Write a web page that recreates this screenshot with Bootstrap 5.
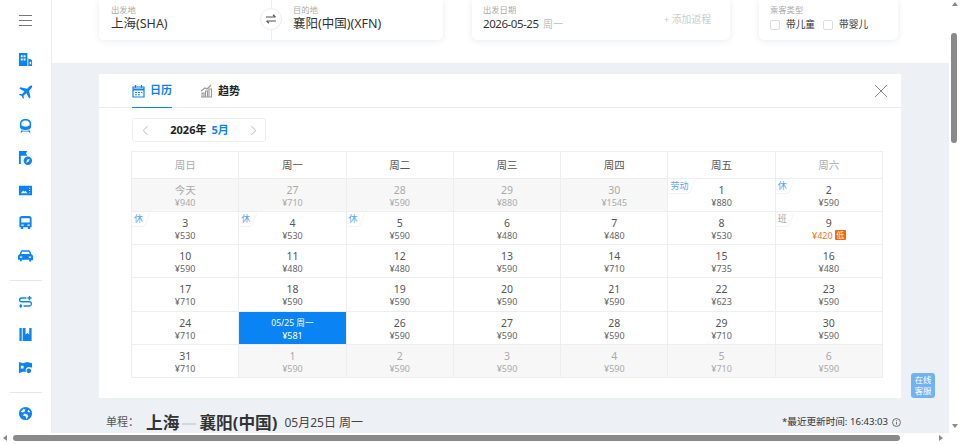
<!doctype html>
<html lang="zh-CN">
  <head>
    <meta charset="utf-8">
    <meta name="viewport" content="width=device-width, initial-scale=1">
    <title>低价日历</title>
    <link href="https://cdn.jsdelivr.net/npm/bootstrap@5.3.0/dist/css/bootstrap.min.css" rel="stylesheet">
    <style>
      html, body { height: 100%; overflow: hidden; }
      body { font-family: "Noto Sans", "Noto Sans CJK SC", sans-serif; color: #333; background: #fff; font-size: 12px; }
      .shell { width: 960px; height: 444px; position: relative; overflow: hidden; }
      .upper { height: 433px; }
      .side { width: 52px; border-right: 1px solid #e9edf2; padding-top: 15px; }
      .burger { width: 13px; height: 11px; border-top: 1px solid #777; border-bottom: 1px solid #777; position: relative; margin-bottom: 17.7px; flex-shrink: 0; }
      .burger::after { content: ""; position: absolute; left: 0; right: 0; top: 4px; border-top: 1px solid #777; }
      .side-ico { height: 32.6px; flex-shrink: 0; }
      .side-ico svg { width: 15px; height: 15px; fill: #0a84f5; }
      .side-line { width: 32px; border-top: 1px solid #e6e6e6; margin: 8px 0 5px; flex-shrink: 0; }
      .view { width: 897px; }
      .topbar { height: 63px; padding-left: 47px; gap: 29px; background: #fff; }
      .qcard { height: 40px; background: #fff; border-radius: 0 0 5px 5px; box-shadow: 0 1px 6px rgba(30, 50, 90, .1); padding: 4px 11px 0; position: relative; }
      .qcard-a { width: 344px; padding-left: 12px; }
      .qcard-b { width: 258px; }
      .qcard-c { width: 139px; }
      .lbl { font-size: 8.300px; color: #aaa; line-height: 12px; }
      .val { font-size: 12.500px; color: #333; line-height: 15px; white-space: nowrap; }
      .val-date { font-size: 11.500px; letter-spacing: -.45px; }
      .val-half { width: 160px; flex-shrink: 0; }
      .val-half + .val-half { width: 172px; border-left: 1px solid #eee; padding-left: 21px; height: 40px; margin-top: -4px; padding-top: 4px; }
      .swap { position: absolute; left: 161px; top: 8px; width: 22px; height: 22px; border-radius: 50%; background: #fff; border: 1px solid #eee; z-index: 1; }
      .muted-day { color: #bbb; font-size: 10px; letter-spacing: 0; margin-left: 2px; }
      .add-back { position: absolute; right: 19px; top: 12px; color: #ccc; font-size: 9.800px; line-height: 15px; }
      .tick { width: 10px; height: 10px; border: 1px solid #ddd; border-radius: 2px; margin-right: 6px; flex-shrink: 0; }
      .pax { font-size: 9.700px; margin-right: 8px; line-height: 18px; white-space: nowrap; }
      .graybody { background: #edf0f5; height: 370px; padding: 11px 0 0 47px; }
      .panel { width: 802px; height: 324px; background: #fff; position: relative; }
      .tabbar { height: 34px; border-bottom: 1px solid #e8ecf0; padding-left: 33px; gap: 28px; }
      .tabitem { height: 34px; font-size: 11px; font-weight: 700; color: #222; gap: 5px; }
      .tabitem.on { color: #0a84f5; border-bottom: 1px solid #0a84f5; width: 40px; }
      .tabitem svg { width: 13px; height: 14px; flex-shrink: 0; }
      .closer { position: absolute; right: 13px; top: 10px; width: 14px; height: 14px; }
      .monthbox { width: 134px; height: 24px; margin: 10px 0 9px 33px; border: 1px solid #eee; border-radius: 3px; padding: 0 8px 0 9px; font-size: 11px; font-weight: 700; color: #222; }
      .monthbox em { font-style: normal; color: #0a84f5; font-size: 11px; margin-left: 5px; }
      .monthbox svg { width: 7px; height: 11px; }
      .calgrid { width: 752px; margin-left: 32px; display: grid; grid-template-columns: repeat(7, 1fr); grid-template-rows: 27px repeat(6, 33.170px); border-top: 1px solid #eee; border-left: 1px solid #eee; }
      .cal-h, .cal-d { border-right: 1px solid #eee; border-bottom: 1px solid #eee; text-align: center; position: relative; }
      .cal-h { font-size: 10.500px; line-height: 26px; color: #555; }
      .cal-h.wk { color: #aaa; }
      .cal-d { padding-top: 4px; background: #fff; }
      .cal-d b { display: block; font-weight: 400; font-size: 10.500px; line-height: 14px; color: #555; }
      .cal-d i { display: block; font-style: normal; font-size: 9px; line-height: 11px; color: #666; }
      .cal-d.past { background: #f7f7f7; }
      .cal-d.past b, .cal-d.past i { color: #aaa; }
      .cal-d.sel { background: #0a84f5; }
      .cal-d.sel b { color: #fff; font-size: 8.600px; }
      .cal-d.sel i { color: #fff; }
      .cal-d.low i { color: #f5771f; }
      .lowtag { display: inline-block; width: 11px; height: 10px; background: #f5670f; color: #fff; font-size: 8px; line-height: 10px; border-radius: 1px; margin-left: 2px; vertical-align: top; }
      .holi { position: absolute; left: 0; top: 0; height: 14px; font-size: 9px; line-height: 13px; padding: 0 7px 0 2px; color: #5aa5f5; z-index: 1; }
      .holi::before { content: ""; position: absolute; left: -4px; right: 3px; top: 0; bottom: 0; background: #fff; border-radius: 0 0 3px 0; box-shadow: 1px 1px 1px rgba(0, 0, 0, .05); transform: skewX(-20deg); z-index: -1; }
      .holi-clip { position: absolute; left: 0; top: 0; width: 40px; height: 18px; overflow: hidden; }
      .holi.work { color: #aaa; }
      .routeline { height: 35px; width: 795px; margin-left: 7px; padding-top: 14px; }
      .routeline .kind { font-size: 11px; color: #555; width: 40px; }
      .routeline .city { font-size: 16.700px; font-weight: 700; color: #333; }
      .routeline .dash { width: 14px; border-top: 2px solid #d3d6da; margin: 2px 3px 0; }
      .routeline .when { font-size: 12px; color: #444; margin-left: 7px; }
      .updated { font-size: 9.600px; color: #333; }
      .updated svg { width: 9px; height: 9px; margin-left: 4px; }
      .vbar { width: 11px; background: #fff; position: relative; }
      .vthumb { position: absolute; left: 2px; top: 33px; width: 6px; height: 110px; border-radius: 3px; background: #8a8a8a; }
      .hbar { height: 11px; background: #fff; position: relative; }
      .hthumb { position: absolute; left: 13px; top: 2px; width: 887px; height: 6px; border-radius: 3px; background: #8a8a8a; }
      .arrow { position: absolute; width: 0; height: 0; border: 3px solid transparent; }
      .arrow-u { left: 3px; top: 2px; border-bottom: 4px solid #8a8a8a; border-top: 0; }
      .arrow-d { left: 3px; bottom: 5px; border-top: 4px solid #8a8a8a; border-bottom: 0; }
      .arrow-l { left: 3px; top: 2px; border-right: 4px solid #8a8a8a; border-left: 0; }
      .arrow-r { left: 939px; top: 2px; border-left: 4px solid #8a8a8a; border-right: 0; }
      .helper { position: absolute; left: 911px; top: 373px; width: 24px; height: 25px; border-radius: 3px; background: #71b3f2; color: #fff; font-size: 8.300px; line-height: 11px; text-align: center; padding-top: 1px; }
      .helper div { height: 11px; }
    </style>
  </head>
  <body>
    <div class="shell">
      <div class="upper d-flex">
        <!-- left menu -->
        <div class="side d-flex flex-column align-items-center flex-shrink-0">
          <div class="burger"></div>
          <div class="side-ico d-flex align-items-center justify-content-center"><svg viewBox="0 0 16 16"><path d="M1 1h9v14H1zM3 3.500v2h2v-2zM6 3.500v2h2v-2zM3 7v2h2V7zM6 7v2h2V7zM11 7l4 1.500V15h-4zM12.500 10.500V13H14v-2.500z" fill-rule="evenodd"/></svg></div>
          <div class="side-ico d-flex align-items-center justify-content-center"><svg viewBox="0 0 16 16"><path d="M15.500.5c-1.200-.3-2.700.3-3.700 1.300L9.700 3.900 2.700 2.400 1.400 3.700l5.500 3.100-2.700 3-2.300-.4L1 10.300l3 1.400 1.400 3 .9-.9-.4-2.300 3-2.700 3.100 5.500 1.300-1.300-1.500-7 2.100-2.100c1-1 1.600-2.500 1.100-3.400z"/></svg></div>
          <div class="side-ico d-flex align-items-center justify-content-center"><svg viewBox="0 0 16 16"><path d="M8 1C4.200 1 2 3 2 6.500V9c0 2.500 2.200 3.800 6 3.800s6-1.300 6-3.800V6.500C14 3 11.800 1 8 1zm0 1.600c2.700 0 4.400 1.400 4.400 3.900v1.300C11.400 8.700 9.800 9.200 8 9.200s-3.400-.5-4.400-1.400V6.500C3.600 4 5.300 2.600 8 2.600zM3.700 13 2.500 15.500h1.700l.5-1h6.600l.5 1h1.700L12.300 13c-1.100.4-2.600.6-4.300.6s-3.200-.2-4.300-.6z" fill-rule="evenodd"/></svg></div>
          <div class="side-ico d-flex align-items-center justify-content-center"><svg viewBox="0 0 16 16"><path d="M1 1h9L8.500 3.500 10 6H3v9H1zM10.500 7a4.500 4.500 0 1 0 0 9 4.500 4.500 0 0 0 0-9zm2 2.300-1 3-2.800 1.200 1-3z" fill-rule="evenodd"/></svg></div>
          <div class="side-ico d-flex align-items-center justify-content-center"><svg viewBox="0 0 16 16"><path d="M1 3h14v10H1zM3 11h7L8 8.500 6.800 9.300 5.500 8zM12 5v1h1V5zM12 7.500v1h1v-1zM12 10v1h1v-1z" fill-rule="evenodd"/></svg></div>
          <div class="side-ico d-flex align-items-center justify-content-center"><svg viewBox="0 0 16 16"><path d="M4 1h8c1.600 0 2.500 1 2.500 2.500V13H13v2h-2.500v-2h-5v2H3v-2H1.500V3.500C1.500 2 2.400 1 4 1zM3.500 3.500V8h9V3.500zM3.500 10v1.500H6V10zM10 10v1.500h2.500V10z" fill-rule="evenodd"/></svg></div>
          <div class="side-ico d-flex align-items-center justify-content-center"><svg viewBox="0 0 16 16"><path d="M4.500 2.500h7c.8 0 1.300.4 1.600 1l1.100 3.200c1 .4 1.800 1.200 1.800 2.300v4h-2v1.500h-2V12.500H4v1.500H2v-1.500H0V9c0-1.100.8-1.900 1.800-2.300L2.900 3.500c.3-.6.800-1 1.600-1zM4.300 4 3.500 6.500h9L11.700 4zM2 9v1.500h2.500V9zM11.500 9v1.500H14V9z" fill-rule="evenodd"/></svg></div>
          <div class="side-line"></div>
          <div class="side-ico d-flex align-items-center justify-content-center"><svg viewBox="0 0 16 16"><path d="M3.500 2.500H9V4H3.800C3 4 2.500 4.500 2.500 5.300S3 6.500 3.800 6.500h8.400c1.600 0 2.800 1.200 2.800 2.900s-1.200 3-2.800 3H6v-1.500h6.200c.8 0 1.300-.2 1.300-1.500S13 8 12.200 8H3.800C2.200 8 1 6.800 1 5.300s1-2.800 2.500-2.800zM11.500 1H13v1.500h1.500V4H13v1.500h-1.500V4H10V2.500h1.500zM1.500 11h3v1.500h-3zM2.200 9.800h1.500v3.900H2.200z"/></svg></div>
          <div class="side-ico d-flex align-items-center justify-content-center"><svg viewBox="0 0 16 16"><path d="M1.500 1H4v14H1.500zM5 1h3v7l2-1.500L12 8V1h2.500v14H5z"/></svg></div>
          <div class="side-ico d-flex align-items-center justify-content-center"><svg viewBox="0 0 16 16"><path d="M1 2l4 1.500L10 2l5 1.500V8h-1.500a3.500 3.500 0 0 0-5 4.500H5L1 14zM3 6v3h3V6zM11.500 9a2.500 2.500 0 1 0 0 5 2.500 2.500 0 0 0 0-5z" fill-rule="evenodd"/></svg></div>
          <div class="side-line"></div>
          <div class="side-ico d-flex align-items-center justify-content-center"><svg viewBox="0 0 16 16"><path d="M8 1a7 7 0 1 0 0 14A7 7 0 0 0 8 1zM3 6l3-3 2 1-1 2-2 1zm6 8-1-3-3-1 2-2 3 1 1 2zm3-7-2-1 1-2 2 2z" fill-rule="evenodd"/></svg></div>
        </div>

        <div class="view flex-shrink-0">
          <!-- search summary -->
          <div class="topbar d-flex align-items-start">
            <div class="qcard qcard-a d-flex">
              <div class="val-half"><div class="lbl">出发地</div><div class="val">上海(SHA)</div></div>
              <div class="val-half"><div class="lbl">目的地</div><div class="val">襄阳(中国)(XFN)</div></div>
              <div class="swap d-flex align-items-center justify-content-center">
                <svg width="12" height="10" viewBox="0 0 12 10" fill="none" stroke="#555" stroke-width="1.200"><path d="M1 3h9.500M8 .800 10.500 3M11 7H1.500M4 9.200 1.500 7"/></svg>
              </div>
            </div>
            <div class="qcard qcard-b">
              <div class="lbl">出发日期</div>
              <div class="val val-date">2026-05-25 <span class="muted-day">周一</span></div>
              <div class="add-back">+ 添加返程</div>
            </div>
            <div class="qcard qcard-c">
              <div class="lbl">乘客类型</div>
              <div class="d-flex align-items-center">
                <span class="tick"></span><span class="pax">带儿童</span>
                <span class="tick"></span><span class="pax">带婴儿</span>
              </div>
            </div>
          </div>

          <div class="graybody">
            <div class="panel">
              <div class="tabbar d-flex">
                <div class="tabitem on d-flex align-items-center flex-shrink-0">
                  <svg viewBox="0 0 13 14" fill="none" stroke="#0a84f5" stroke-width="1.200"><path d="M1 3h11v10H1zM3.500 1v3M9.500 1v3"/><path d="M1 5.500h11" stroke-width="2"/><path d="M3 8.500h2M6 8.500h2M9 8.500h1.500M3 10.800h2M6 10.800h2" stroke-width="1.100"/></svg>
                  <span class="text-nowrap">日历</span>
                </div>
                <div class="tabitem d-flex align-items-center">
                  <svg viewBox="0 0 13 14" fill="none" stroke="#999" stroke-width="1.100"><path d="M1 13h11M2 13V9h2v4M5.500 13V7h2v6M9 13V5h2.500v8M1 7l4-3 2 1 4-4"/></svg>
                  <span>趋势</span>
                </div>
              </div>
              <svg class="closer" viewBox="0 0 14 14" fill="none" stroke="#888" stroke-width="1"><path d="M1 1l12 12M13 1 1 13"/></svg>
              <div class="monthbox d-flex align-items-center justify-content-between">
                <svg viewBox="0 0 8 12" fill="none" stroke="#ccc" stroke-width="1.200"><path d="M6.500 1 1.500 6l5 5"/></svg>
                <span>2026年<em>5月</em></span>
                <svg viewBox="0 0 8 12" fill="none" stroke="#ccc" stroke-width="1.200"><path d="M1.500 1l5 5-5 5"/></svg>
              </div>
              <div class="calgrid" id="cal"></div>
            </div>
            <div class="routeline d-flex align-items-center justify-content-between">
              <div class="d-flex align-items-center">
                <span class="kind">单程：</span>
                <span class="city">上海</span><span class="dash"></span><span class="city">襄阳(中国)</span>
                <span class="when">05月25日 周一</span>
              </div>
              <div class="updated d-flex align-items-center">*最近更新时间: 16:43:03
                <svg viewBox="0 0 10 10" fill="none" stroke="#555" stroke-width=".9"><circle cx="5" cy="5" r="4.400"/><path d="M5 4.300v3M5 2.400v1"/></svg>
              </div>
            </div>
          </div>
        </div>

        <div class="vbar flex-shrink-0">
          <span class="arrow arrow-u"></span>
          <div class="vthumb"></div>
          <span class="arrow arrow-d"></span>
        </div>
      </div>
      <div class="hbar">
        <span class="arrow arrow-l"></span>
        <div class="hthumb"></div>
        <span class="arrow arrow-r"></span>
      </div>
      <div class="helper"><div>在线</div><div>客服</div></div>
    </div>

    <script src="https://cdn.jsdelivr.net/npm/bootstrap@5.3.0/dist/js/bootstrap.bundle.min.js"></script>
    <script>
      // day, price, state, holiday tag
      const weekdays = ['周日', '周一', '周二', '周三', '周四', '周五', '周六'];
      const days = [
        ['今天', 940, 'past'], [27, 710, 'past'], [28, 590, 'past'], [29, 880, 'past'], [30, 1545, 'past'], [1, 880, '', '劳动'], [2, 590, '', '休'],
        [3, 530, '', '休'], [4, 530, '', '休'], [5, 590, '', '休'], [6, 480], [7, 480], [8, 530], [9, 420, 'low', '班'],
        [10, 590], [11, 480], [12, 480], [13, 590], [14, 710], [15, 735], [16, 480],
        [17, 710], [18, 590], [19, 590], [20, 590], [21, 590], [22, 623], [23, 590],
        [24, 710], ['05/25 周一', 581, 'sel'], [26, 590], [27, 590], [28, 590], [29, 710], [30, 590],
        [31, 710], [1, 590, 'past'], [2, 590, 'past'], [3, 590, 'past'], [4, 590, 'past'], [5, 710, 'past'], [6, 590, 'past']
      ];
      let html = weekdays.map((w, i) => `<div class="cal-h ${i % 6 === 0 ? 'wk' : ''}">${w}</div>`).join('');
      days.forEach(([d, p, state = '', tag]) => {
        const tagHtml = tag ? `<span class="holi-clip"><span class="holi ${tag === '班' ? 'work' : ''}">${tag}</span></span>` : '';
        const low = state === 'low' ? '<span class="lowtag">低</span>' : '';
        html += `<div class="cal-d ${state}">${tagHtml}<b>${d}</b><i>¥${p}${low}</i></div>`;
      });
      document.getElementById('cal').innerHTML = html;
    </script>
  </body>
</html>
